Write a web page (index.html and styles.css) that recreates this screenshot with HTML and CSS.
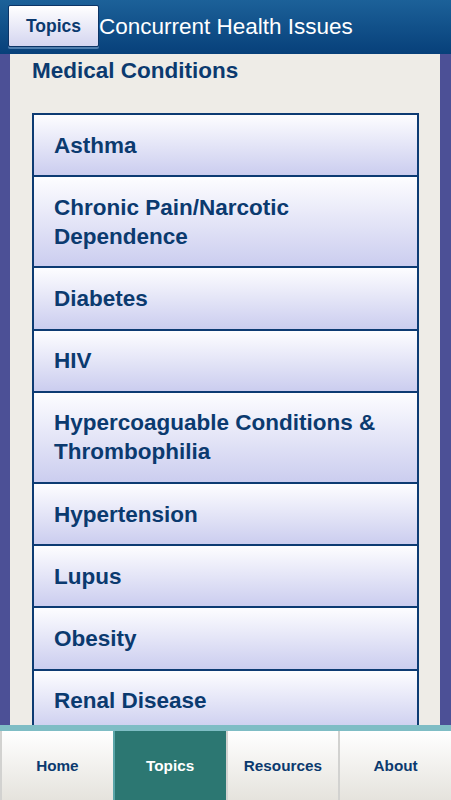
FILE: index.html
```html
<!DOCTYPE html>
<html lang="en">
<head>
    <meta charset="UTF-8">
    <meta name="viewport" content="width=device-width, initial-scale=1.0">
    <title>Concurrent Health Issues</title>
    <link rel="stylesheet" href="styles.css">
</head>
<body>
    <div class="app">
        <header class="topbar">
            <button class="back-btn" type="button">Topics</button>
            <h1 class="title">Concurrent Health Issues</h1>
        </header>

        <main class="content">
            <div class="panel">
                <h2 class="section-title">Medical Conditions</h2>
                <ul class="topic-list">
                    <li class="topic">Asthma</li>
                    <li class="topic">Chronic Pain/Narcotic Dependence</li>
                    <li class="topic">Diabetes</li>
                    <li class="topic">HIV</li>
                    <li class="topic">Hypercoaguable Conditions &amp; Thrombophilia</li>
                    <li class="topic">Hypertension</li>
                    <li class="topic">Lupus</li>
                    <li class="topic">Obesity</li>
                    <li class="topic">Renal Disease</li>
                </ul>
            </div>
        </main>

        <nav class="tabbar">
            <a class="tab" href="#"><span>Home</span></a>
            <a class="tab active" href="#"><span>Topics</span></a>
            <a class="tab" href="#"><span>Resources</span></a>
            <a class="tab" href="#"><span>About</span></a>
        </nav>
    </div>
</body>
</html>
```

FILE: styles.css
```css
* {
    box-sizing: border-box;
}

body {
    margin: 0;
    padding: 0;
    font-family: 'Liberation Sans', Arial, sans-serif;
    background-color: #4c5096;
}

.app {
    display: flex;
    flex-direction: column;
    height: 800px;
    width: 451px;
    overflow: hidden;
}

/* top bar */
.topbar {
    height: 54px;
    flex-shrink: 0;
    display: flex;
    align-items: center;
    padding-left: 8px;
    background: linear-gradient(to bottom, #1c6199, #07407a);
}

.back-btn {
    width: 91px;
    height: 42px;
    margin-top: -2px;
    font-family: inherit;
    font-size: 17.5px;
    font-weight: bold;
    color: #0b3a6f;
    border: 1px solid #0c3466;
    border-radius: 2px;
    background: linear-gradient(to bottom, #ffffff, #d4d5f0);
    box-shadow: 0 2px 0 #4f7eae;
    padding: 0;
}

.title {
    margin: 0;
    font-size: 22.5px;
    font-weight: normal;
    color: #ffffff;
}

/* content */
.content {
    flex: 1;
    overflow: hidden;
    padding: 0 11px 0 10px;
}

.panel {
    background-color: #eeece7;
    min-height: 100%;
    padding: 2px 21px 0 22px;
}

.section-title {
    margin: 0 0 28px 0;
    font-size: 22.5px;
    line-height: 29px;
    color: #0b3a6f;
}

.topic-list {
    list-style: none;
    margin: 0;
    padding: 0;
    border: 2px solid #0d3b73;
    border-bottom: none;
}

.topic {
    padding: 15.6px 20px;
    font-size: 22.5px;
    line-height: 29px;
    font-weight: bold;
    color: #0b3a6f;
    border-bottom: 2px solid #0d3b73;
    background: linear-gradient(to bottom, #fdfdff, #cbcdef);
}

/* bottom tabs */
.tabbar {
    flex-shrink: 0;
    display: flex;
    height: 75px;
    border-top: 6px solid #7fbdc5;
    background-color: #ffffff;
}

.tab {
    flex: 1;
    display: flex;
    align-items: center;
    justify-content: center;
    font-size: 15.3px;
    font-weight: bold;
    color: #0b3a6f;
    text-decoration: none;
    border-left: 2px solid #d2d2d0;
    background: linear-gradient(to bottom, #ffffff, #e5e3dd);
}

.tab.active {
    color: #ffffff;
    background: #2c7772;
    border-left-color: #5aa5a8;
}
```
